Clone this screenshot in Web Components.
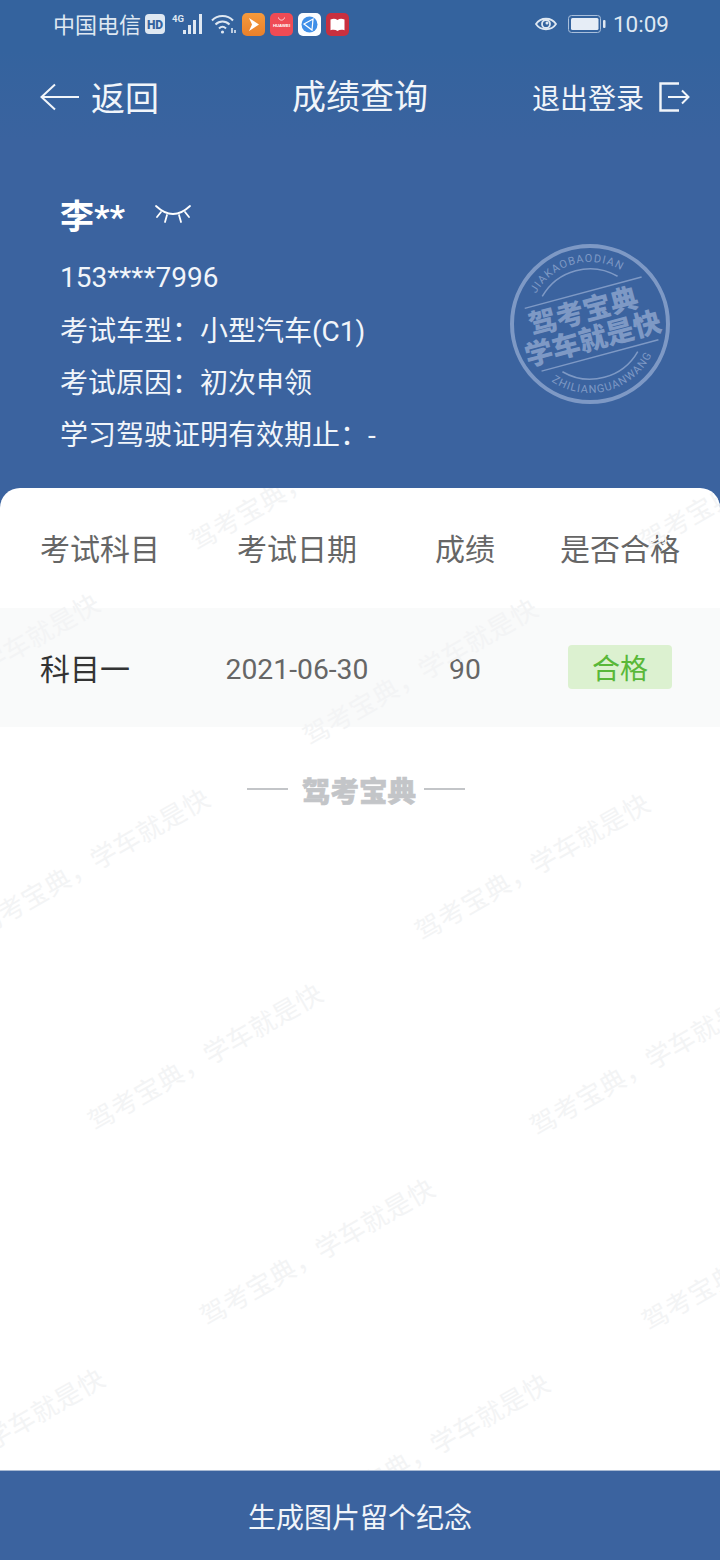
<!DOCTYPE html>
<html lang="zh"><head><meta charset="utf-8"><title>成绩查询</title>
<style>
html,body{margin:0;padding:0;background:#3b639f}
body{font-family:Roboto,"Noto Sans CJK SC",sans-serif}
</style></head><body>
<app-shell>
  <status-bar></status-bar>
  <nav-bar back="返回" title-text="成绩查询" action="退出登录"></nav-bar>
  <info-panel>
    <span slot="name">李**</span>
    <info-line>153****7996</info-line>
    <info-line>考试车型：小型汽车(C1)</info-line>
    <info-line>考试原因：初次申领</info-line>
    <info-line>学习驾驶证明有效期止：-</info-line>
  </info-panel>
  <result-card>
    <score-row head><span>考试科目</span><span>考试日期</span><span>成绩</span><span>是否合格</span></score-row>
    <score-row><span>科目一</span><span>2021-06-30</span><span>90</span><pass-badge>合格</pass-badge></score-row>
    <brand-divider>驾考宝典</brand-divider>
  </result-card>
  <footer-bar>生成图片留个纪念</footer-bar>
</app-shell>
<script>
const def=(name,html)=>{customElements.define(name,class extends HTMLElement{
  constructor(){super();this.attachShadow({mode:'open'}).innerHTML=typeof html==='function'?html(this):html;}
});};

def('app-shell',`<style>:host{display:flex;flex-direction:column;width:720px;height:1560px;background:#3b639f;overflow:hidden;color:#fff;font-family:Roboto,"Noto Sans CJK SC",sans-serif}</style><slot></slot>`);

def('status-bar',`<style>
:host{display:flex;align-items:center;justify-content:space-between;height:50px;box-sizing:border-box;padding:0 51px 2px 53px;background:#34639e;color:#dfe8f2;font-size:22px}
.g{display:flex;align-items:center}
.c{position:relative;top:-1px}
.t{font-size:22.5px;margin-left:7px;color:#dfe8f2}
svg{display:block}
.hd{margin-left:4px}.n{margin-left:6px}
</style>
<div class="g"><span class="c">中国电信</span>
<svg class="hd" width="20" height="20" viewBox="0 0 20 20"><rect width="20" height="20" rx="4" fill="#dfe8f2"/><text x="10" y="14.5" text-anchor="middle" font-family="Roboto" font-weight="900" font-size="12" fill="#34639e">HD</text></svg>
<svg class="n" width="36" height="22" viewBox="0 0 36 22"><text x="1" y="9" font-family="Roboto" font-weight="700" font-size="9.5" fill="#dfe8f2">4G</text>
<g fill="#dfe8f2"><rect x="12" y="17" width="3" height="4"/><rect x="17" y="12" width="3" height="9"/><rect x="22" y="7" width="3" height="14"/><rect x="28" y="1" width="3" height="20"/></g></svg>
<svg style="margin-left:4px" width="26" height="22" viewBox="0 0 26 22" fill="none" stroke="#dfe8f2" stroke-width="2"><path d="M1 7.500C6.500 1.500 16.500 1.500 22 7.500"/><path d="M4.500 11.500C8.500 7.500 14.500 7.500 18.500 11.500"/><path d="M8 15.500C10.200 13.300 12.800 13.300 15 15.500"/><circle cx="11.500" cy="19" r="1.600" fill="#dfe8f2" stroke="none"/><path d="M21 15v5M24 17v3" stroke-width="1.600"/></svg>
<svg style="margin-left:5px" width="23" height="23" viewBox="0 0 23 23"><defs><linearGradient id="o" x1="0" y1="0" x2="0" y2="1"><stop offset="0" stop-color="#f59a3c"/><stop offset="1" stop-color="#e9802b"/></linearGradient></defs><rect width="23" height="23" rx="5" fill="url(#o)"/><path d="M7 5l10 6.500L7 18l3-6.500z" fill="#fff"/></svg>
<svg style="margin-left:5px" width="23" height="23" viewBox="0 0 23 23"><rect width="23" height="23" rx="5" fill="#ef4b55"/><path d="M8.500 4.500c.5 3.500 5.500 3.500 6 0" fill="none" stroke="#fff" stroke-width=".8"/><text x="11.500" y="14" text-anchor="middle" font-family="Liberation Sans" font-weight="700" font-size="4.300" fill="#fff">HUAWEI</text></svg>
<svg style="margin-left:5px" width="23" height="23" viewBox="0 0 23 23"><rect width="23" height="23" rx="5" fill="#fbfdff"/><circle cx="11.500" cy="11.500" r="8" fill="#3f8fe8"/><path d="M6 11l9-5-1 11z" fill="none" stroke="#fff" stroke-width="1.200"/></svg>
<svg style="margin-left:5px" width="23" height="23" viewBox="0 0 23 23"><rect width="23" height="23" rx="5" fill="#c8303f"/><path d="M4.500 6.500c3-1 5-.8 7 .5v11c-2-1.300-4-1.500-7-.8zM18.500 6.500c-3-1-5-.8-7 .5v11c2-1.300 4-1.500 7-.8z" fill="#fff"/></svg>
</div>
<div class="g">
<svg width="22" height="16" viewBox="0 0 22 16" fill="none" stroke="#dfe8f2" stroke-width="1.800"><path d="M1 8C5.500 1 16.500 1 21 8C16.500 15 5.500 15 1 8z"/><circle cx="11" cy="8" r="4"/><circle cx="12" cy="7" r="1.500" fill="#dfe8f2" stroke="none"/></svg>
<svg style="margin-left:11px" width="38" height="18" viewBox="0 0 38 18"><rect x=".5" y=".5" width="32" height="17" rx="3" fill="none" stroke="#a9bfdb"/><rect x="3" y="3" width="27.500" height="12" rx="1.500" fill="#e6edf6"/><rect x="35" y="5" width="2.500" height="8" rx="1" fill="#dfe8f2"/></svg>
<span class="t">10:09</span></div>`);

def('nav-bar',h=>`<style>
:host{display:grid;grid-template-columns:1fr auto 1fr;align-items:center;height:90px;box-sizing:border-box;padding:3px 30px 0;background:linear-gradient(#34639e,#3a639f);color:#f1f5fa}
.b,.a{display:flex;align-items:center}
.b{font-size:34px;gap:12px;padding-left:10px}
.c{font-size:34px;line-height:46px}
.a{justify-content:flex-end;font-size:28px;gap:15px}
svg{display:block}
</style>
<div class="b"><svg width="39" height="28" viewBox="0 0 39 28" fill="none" stroke="#f1f5fa" stroke-width="2"><path d="M15 1.500L1.500 14L15 26.500M1.500 14H39"/></svg><span>${h.getAttribute('back')}</span></div>
<div class="c">${h.getAttribute('title-text')}</div>
<div class="a"><span>${h.getAttribute('action')}</span><svg width="31" height="30" viewBox="0 0 31 30" fill="none" stroke="#f1f5fa" stroke-width="2.400"><path d="M20 1.500H1.500V28.500H20"/><path d="M9 15H29M23 8.500L29.500 15L23 21.500" stroke-width="2"/></svg></div>`);

def('info-line',`<style>:host{display:block;font-size:28px;line-height:52px;white-space:nowrap;color:#f1f5fa}</style><slot></slot>`);

def('seal-stamp',`<style>:host{position:absolute;left:510px;top:104px;width:160px;height:160px;display:block}svg{display:block;overflow:visible}</style>
<svg width="160" height="160" viewBox="-80 -80 160 160">
<circle r="78" fill="none" stroke="#7e99c5" stroke-width="4"/>
<g transform="rotate(-15)" fill="#7e99c5" font-family='"Noto Sans CJK SC",sans-serif'>
<defs><path id="up" d="M-62 0A62 62 0 0 1 62 0"/><path id="dn" d="M-69 0A69 69 0 0 0 69 0"/></defs>
<text font-family="Roboto" font-size="11" letter-spacing="1.100" text-anchor="middle"><textPath href="#up" startOffset="50%">JIAKAOBAODIAN</textPath></text>
<text font-family="Roboto" font-size="11" letter-spacing="1" text-anchor="middle"><textPath href="#dn" startOffset="50%">ZHILIANGUANWANG</textPath></text>
<path d="M-39-39A55 55 0 0 1 39-39M-39 39A55 55 0 0 0 39 39" fill="none" stroke="#7e99c5" stroke-width="1.500"/>
<path d="M-59-32H62M-59 33H62" stroke="#7e99c5" stroke-width="1.500"/>
<text x="-3" y="-4" text-anchor="middle" font-size="28" font-weight="900">驾考宝典</text>
<text x="-1" y="25" text-anchor="middle" font-size="28" font-weight="900">学车就是快</text>
</g></svg>`);

def('info-panel',`<style>
:host{display:block;position:relative;height:348px;box-sizing:border-box;padding:48px 60px 0;background:#3b639f}
.n{display:flex;align-items:center;height:52px;margin-bottom:12px;font-size:34px;font-weight:700;color:#fff}
svg{margin-left:30px;display:block}
::slotted(info-line:nth-of-type(1)){margin-bottom:2px}
</style>
<div class="n"><slot name="name"></slot><svg width="36" height="20" viewBox="0 0 36 20" fill="none" stroke="#fff" stroke-width="1.800" stroke-linecap="round"><path d="M1 2Q18 18 35 2"/><path d="M6 8L2 13M12 11L10 18M24 11L26 18M30 8L34 13"/></svg></div>
<slot></slot><seal-stamp></seal-stamp>`);

const marks=[[190,57],[640,57],[-135,247],[303,252],[-25,442],[415,447],[88,637],[530,642],[200,832],[642,837],[-130,1022],[315,1027]];
def('result-card',`<style>
:host{display:block;flex:1;position:relative;background:#fff;border-radius:20px 20px 0 0;overflow:hidden}
.w{position:absolute;inset:0;pointer-events:none;z-index:1}
.w span{position:absolute;display:block;white-space:nowrap;font-size:26px;line-height:30px;letter-spacing:.6px;color:#f3f4f5;transform:rotate(-30deg);transform-origin:0 100%;margin:-18px 0 0 10px}
</style><slot></slot><div class="w">${marks.map(m=>`<span style="left:${m[0]}px;top:${m[1]}px">驾考宝典，学车就是快</span>`).join('')}</div>`);

def('score-row',h=>{const head=h.hasAttribute('head');return `<style>
:host{display:grid;grid-template-columns:158px 198px 138px 172px;align-items:center;padding:0 14px ${head?2:0}px 40px;height:${head?120:119}px;box-sizing:border-box;font-size:${head?30:28.3}px;color:#666;background:${head?'transparent':'#f9fafa'}}
::slotted(*){text-align:center;justify-self:center}
::slotted(span:not(:first-child)){margin-top:${head?0:4}px}
::slotted(:first-child){justify-self:start;text-align:left;font-size:30px;color:${head?'#666':'#333'};margin-bottom:${head?0:2}px}
</style><slot></slot>`});

def('pass-badge',`<style>:host{display:block;width:104px;height:44px;margin-top:-2px;line-height:50px;text-align:center;background:#dcf1d0;color:#59b839;font-size:28px;border-radius:4px}</style><slot></slot>`);

def('brand-divider',`<style>
:host{display:flex;align-items:center;justify-content:center;height:124px;padding-right:8px;color:#c3c5c8;font-size:28.5px;font-weight:900;-webkit-text-stroke:.6px #c3c5c8}
i{display:block;width:41px;height:2px;background:#c3c5c8}
.l{margin-right:14px}.r{margin-left:8px}
</style><i class="l"></i><slot></slot><i class="r"></i>`);

def('footer-bar',`<style>:host{display:flex;align-items:center;justify-content:center;height:90px;box-sizing:border-box;background:#3b639f;color:#f1f5fa;font-size:28px;position:relative;z-index:2;border-top:1px solid #a8b9d2}</style><slot></slot>`);
</script>
</body></html>
